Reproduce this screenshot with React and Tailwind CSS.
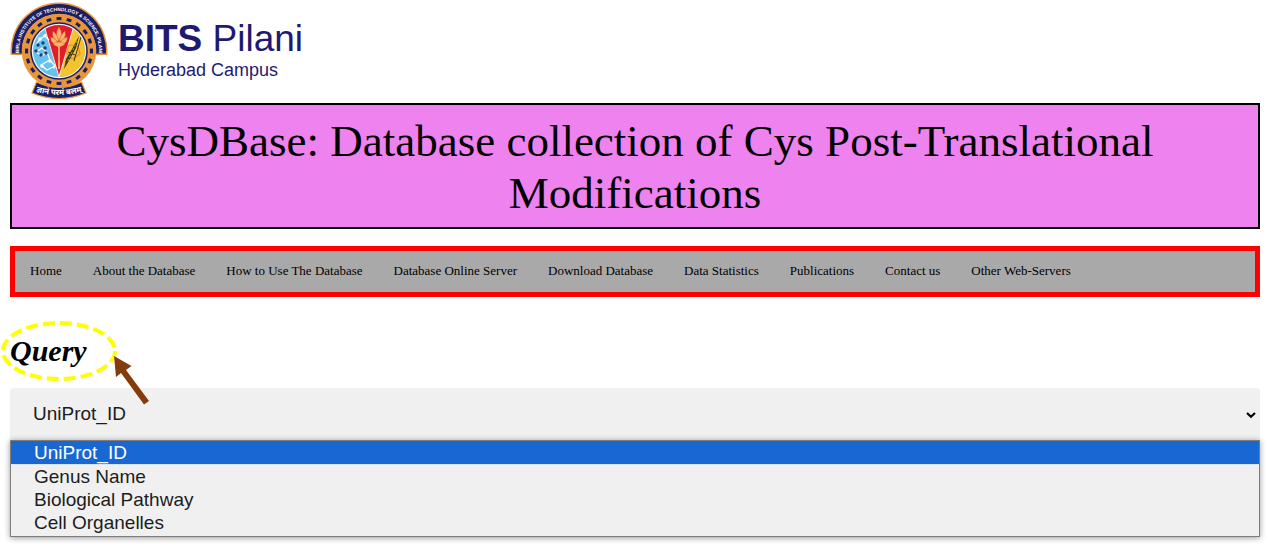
import React from "react";

const NAV_ITEMS = [
  "Home",
  "About the Database",
  "How to Use The Database",
  "Database Online Server",
  "Download Database",
  "Data Statistics",
  "Publications",
  "Contact us",
  "Other Web-Servers",
];

const QUERY_FIELDS = ["UniProt_ID", "Genus Name", "Biological Pathway", "Cell Organelles"];

const TEETH = Array.from({ length: 20 }, (_, i) => i * 18);

function Emblem() {
  return (
    <svg viewBox="0 0 98 98" className="h-[98px] w-[98px] shrink-0" role="img" aria-label="BITS Pilani emblem">
      <defs>
        <path id="motto-arc" d="M9.81 57 A40 40 0 1 1 88.19 57" />
        <path id="banner-arc" d="M24 89 Q49 97 74 89" />
        <clipPath id="disc">
          <circle cx="49" cy="49" r="26" />
        </clipPath>
      </defs>
      {/* Upper lettered band */}
      <path d="M0.67 53 A48.5 48.5 0 1 1 97.33 53 L85.78 53 A37 37 0 1 0 12.22 53 Z" fill="#e8963a" />
      <path d="M2.07 51.5 A47 47 0 1 1 95.93 51.5 L85.92 51.5 A37 37 0 1 0 12.08 51.5 Z" fill="#1d1d63" />
      {/* Gear */}
      <circle cx="49" cy="49" r="37.3" fill="#e8963a" />
      {TEETH.map((a) => (
        <rect key={a} x="46.6" y="15" width="4.8" height="6" fill="#1d1d63" transform={`rotate(${a} 49 49)`} />
      ))}
      <circle cx="49" cy="49" r="31" fill="#e8963a" />
      <circle cx="49" cy="49" r="28.8" fill="#1d1d63" />
      <circle cx="49" cy="49" r="27.3" fill="#f4f2ed" />
      <g clipPath="url(#disc)">
        <rect x="22" y="22" width="54" height="54" fill="#67c2ed" />
        <path d="M32 18 L66 18 L49 76 Z" fill="#e31b2c" />
        <path d="M66 18 L80 18 L80 78 L49 78 L49 75 Z" fill="#f5c32c" />
        <path d="M33 20 L49 75 L65 20" fill="none" stroke="#f4f2ed" strokeWidth="1" />
        {/* Molecule */}
        <path
          d="M30 37 L35 34 L39 38 M30 37 L26 43 M26 50 L32 46 L37 50 L32 54 Z M31 63 L40 58 L45 64 L37 68 Z M37 50 L40 58"
          fill="none"
          stroke="#ffffff"
          strokeWidth="1.2"
        />
        <g fill="#ffffff">
          <circle cx="30" cy="37" r="1.8" />
          <circle cx="35" cy="33.5" r="1.5" />
          <circle cx="32" cy="64" r="1.8" />
          <circle cx="40" cy="59" r="1.8" />
          <circle cx="44" cy="65" r="1.5" />
        </g>
        <g fill="#1d3f7e">
          <circle cx="33" cy="41" r="1.7" />
          <circle cx="28" cy="43" r="1.7" />
          <circle cx="26" cy="49" r="1.7" />
          <circle cx="31" cy="53" r="1.7" />
          <circle cx="36" cy="51" r="1.7" />
          <circle cx="35" cy="46" r="1.7" />
        </g>
        {/* Lotus */}
        <g fill="#f6b76a" stroke="#d9582d" strokeWidth="0.4">
          <path d="M49 25 Q44 32 49 39 Q54 32 49 25 Z" />
          <path d="M43 29 Q41 37 48.5 40 Q48 33 43 29 Z" />
          <path d="M55 29 Q57 37 49.5 40 Q50 33 55 29 Z" />
          <path d="M40.500 35 Q41 43 49 43 Q46 36 40.500 35 Z" />
          <path d="M57.500 35 Q57 43 49 43 Q52 36 57.500 35 Z" />
          <path d="M43 42 Q49 38 55 42 Q49 48 43 42 Z" />
        </g>
        <path d="M49 44 V67" stroke="#f6b76a" strokeWidth="1.8" />
        {/* Instruments */}
        <path d="M59 43 L68 44 L70 52 L62 57 L56 51 Z" fill="none" stroke="#dd9230" strokeWidth="1.2" />
        <path d="M69 34 L66 46 L60 57 L54 67 L56 57 L62 47 Z" fill="#3c3626" />
        <path d="M71 35 L64 59 M58 50 L65 53" stroke="#3c3626" strokeWidth="1" />
        <path d="M67 39 L57 61" stroke="#f5c32c" strokeWidth="0.8" strokeDasharray="2 2" />
      </g>
      {/* Ribbon */}
      <path d="M26.500 80 Q49 91 71.500 80 L76 91 Q49 102 22 91 Z" fill="#1d1d63" stroke="#e8963a" strokeWidth="1.2" />
      <text fill="#ffffff" fontSize="8" fontWeight="700" className="font-['Noto_Sans',sans-serif]" textAnchor="middle">
        <textPath href="#banner-arc" startOffset="50%">ज्ञानं परमं बलम्</textPath>
      </text>
      <text fill="#ffffff" fontSize="4.8" fontWeight="700" className="font-['Liberation_Sans',sans-serif]" textAnchor="middle">
        <textPath href="#motto-arc" startOffset="50%">BIRLA INSTITUTE OF TECHNOLOGY &amp; SCIENCE, PILANI</textPath>
      </text>
    </svg>
  );
}

function Header() {
  return (
    <header className="flex h-[103px] items-start gap-[10px] pt-[2px]">
      <Emblem />
      <div className="pt-4 font-['Liberation_Sans',Arial,sans-serif] text-[#1f1a70]">
        <p className="text-[37px] leading-[42px]">
          <span className="font-bold">BITS</span> Pilani
        </p>
        <p className="text-[18px] leading-5">Hyderabad Campus</p>
      </div>
    </header>
  );
}

function QueryHeading() {
  return (
    <div className="relative mt-[35px]">
      <h2 className="text-[30px] font-bold italic leading-[38px]">
        <label htmlFor="query-field">Query</label>
      </h2>
      <svg
        viewBox="0 0 160 90"
        className="pointer-events-none absolute -left-[10px] -top-[16px] z-10 h-[90px] w-[160px]"
        aria-hidden="true"
      >
        <ellipse cx="59" cy="35" rx="56" ry="28" fill="none" stroke="#ffff00" strokeWidth="4" strokeDasharray="12 5" />
        <path d="M114 40 L131.500 50 L126 54 L149 85 L144 88.500 L121 57 L116 61 Z" fill="#843c0c" />
      </svg>
    </div>
  );
}

function QuerySelect() {
  return (
    <div className="mt-[18px] font-['Liberation_Sans',Arial,sans-serif] text-[19px] text-[#1c1c1c]">
      <div className="relative">
        <select
          id="query-field"
          defaultValue="UniProt_ID"
          className="block h-[52px] w-full appearance-none rounded-t bg-[#f0f0f0] px-[23px] leading-6 outline-none"
        >
          {QUERY_FIELDS.map((f) => (
            <option key={f}>{f}</option>
          ))}
        </select>
        <svg viewBox="0 0 10 8" className="pointer-events-none absolute right-1 top-[23px] h-2 w-[10px]" aria-hidden="true">
          <path d="M1 2 L5 5.800 L9 2" fill="none" stroke="#000000" strokeWidth="2.2" />
        </svg>
      </div>
      <ul
        role="listbox"
        aria-label="Query fields"
        className="relative border border-[#7d7d7d] bg-[#f0f0f0] pb-[2px] shadow-[0_1px_6px_rgba(0,0,0,0.4)]"
      >
        {QUERY_FIELDS.map((f, i) => (
          <li
            key={f}
            role="option"
            aria-selected={i === 0}
            className={
              i === 0
                ? "border-b border-[#d5e4f7] bg-[#1967d2] px-[23px] leading-[23px] text-white"
                : "px-[23px] leading-[23px]"
            }
          >
            {f}
          </li>
        ))}
      </ul>
    </div>
  );
}

export default function App() {
  return (
    <div className="bg-white pb-2 pl-[10px] pr-[9px] font-['Liberation_Serif','Times_New_Roman',serif] text-black">
      <Header />
      <h1 className="border-2 border-black bg-[#ee82ee] px-4 pb-2 pt-[10px] text-center text-[45px] leading-[52px]">
        CysDBase: Database collection of Cys Post-Translational Modifications
      </h1>
      <nav className="mt-[17px] flex flex-wrap gap-x-px border-[5px] border-[#ff0000] bg-[#a9a9a9]">
        {NAV_ITEMS.map((item) => (
          <a key={item} href="#" className="px-[15px] pb-[11px] pt-[9px] text-[13px] leading-[21px]">
            {item}
          </a>
        ))}
      </nav>
      <main>
        <QueryHeading />
        <QuerySelect />
      </main>
    </div>
  );
}
